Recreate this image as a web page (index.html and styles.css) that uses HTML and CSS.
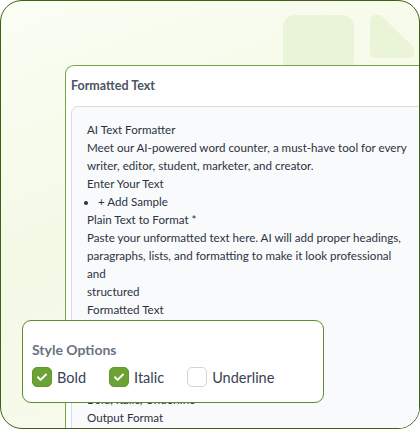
FILE: index.html
```html
<!DOCTYPE html>
<html lang="en">
<head>
    <meta charset="UTF-8">
    <meta name="viewport" content="width=device-width, initial-scale=1.0">
    <title>AI Text Formatter - Style Options</title>
    <link rel="stylesheet" href="styles.css">
</head>
<body>
    <div class="frame">
        <div class="deco">
            <div class="deco-block"></div>
            <div class="deco-doc"></div>
        </div>

        <div class="window">
            <div class="window-title">Formatted Text</div>
            <div class="output-box">
                <div class="output-text">
                    <div>AI Text Formatter</div>
                    <div>Meet our AI-powered word counter, a must-have tool for every writer, editor, student, marketer, and creator.</div>
                    <div>Enter Your Text</div>
                    <ul class="sample-list">
                        <li>+ Add Sample</li>
                    </ul>
                    <div>Plain Text to Format *</div>
                    <div>Paste your unformatted text here. AI will add proper headings, paragraphs, lists, and formatting to make it look professional<br>and<br>structured</div>
                    <div>Formatted Text</div>
                    <div>Copy</div>
                    <div>Download</div>
                    <div>Clear</div>
                    <div>Style Options</div>
                    <div>Bold, Italic, Underline</div>
                    <div>Output Format</div>
                </div>
            </div>
        </div>

        <div class="style-card">
            <div class="style-title">Style Options</div>
            <div class="options">
                <label class="option">
                    <span class="box checked">
                        <svg viewBox="0 0 20 20" width="20" height="20"><path d="M6 10.3l2.6 2.6L14 7.5" fill="none" stroke="#fff" stroke-width="2" stroke-linecap="round" stroke-linejoin="round"/></svg>
                    </span>
                    Bold
                </label>
                <label class="option">
                    <span class="box checked">
                        <svg viewBox="0 0 20 20" width="20" height="20"><path d="M6 10.3l2.6 2.6L14 7.5" fill="none" stroke="#fff" stroke-width="2" stroke-linecap="round" stroke-linejoin="round"/></svg>
                    </span>
                    Italic
                </label>
                <label class="option">
                    <span class="box"></span>
                    Underline
                </label>
            </div>
        </div>
    </div>
</body>
</html>
```

FILE: styles.css
```css
body {
    margin: 0;
    font-family: 'Lato', 'Noto Sans', sans-serif;
    background: #ffffff;
}
.frame {
    position: relative;
    box-sizing: border-box;
    width: 420px;
    height: 429px;
    border: 1.5px solid #3f6212;
    border-radius: 22px;
    overflow: hidden;
    background: linear-gradient(160deg, #fbfef4 0%, #f4f9e6 45%, #f7fbee 100%);
    padding: 64px 0 0 64px;
}
.deco {
    position: absolute;
    top: 14px;
    left: 282px;
    display: flex;
    gap: 16px;
}
.deco-block {
    width: 71px;
    height: 70px;
    border-radius: 12px;
    background: #eaf4d8;
}
.deco-doc {
    width: 44px;
    height: 43px;
    border-radius: 5px;
    clip-path: polygon(0 0, 24% 0, 100% 76%, 100% 100%, 0 100%);
    background: #eaf4d6;
}
.window {
    position: relative;
    width: 380px;
    height: 400px;
    background: #ffffff;
    border-top: 1px solid #75a545;
    border-left: 1px solid #75a545;
    border-top-left-radius: 9px;
    padding: 0 0 0 5px;
}
.window-title {
    height: 40px;
    line-height: 40px;
    font-size: 12.5px;
    font-weight: 700;
    color: #4b5563;
}
.output-box {
    width: 400px;
    background: #f8fafc;
    border: 1px solid #d6dde7;
    border-radius: 7px;
    padding: 14px 0 0 15px;
    height: 330px;
    font-size: 11.6px;
    line-height: 18px;
    color: #2d3340;
}
.output-text {
    width: 332px;
}
.sample-list {
    margin: 0;
    padding-left: 11px;
}
.style-card {
    position: absolute;
    left: 21px;
    top: 319px;
    width: 302px;
    height: 83px;
    box-sizing: border-box;
    background: #ffffff;
    border: 1px solid #5f8d2c;
    border-radius: 9px;
    padding: 20px 0 0 9px;
}
.style-title {
    font-size: 14px;
    font-weight: 700;
    color: #6b7280;
    margin-bottom: 9px;
}
.options {
    display: flex;
    gap: 23px;
}
.option {
    display: flex;
    align-items: center;
    gap: 5px;
    font-size: 14.5px;
    color: #374151;
}
.box {
    display: inline-flex;
    box-sizing: border-box;
    width: 20px;
    height: 20px;
    border-radius: 5px;
    border: 1.5px solid #d1d5db;
    background: #ffffff;
}
.box.checked {
    background: #6aa233;
    border-color: #5f9a2a;
}
.box svg {
    margin: -1.5px;
}
```
